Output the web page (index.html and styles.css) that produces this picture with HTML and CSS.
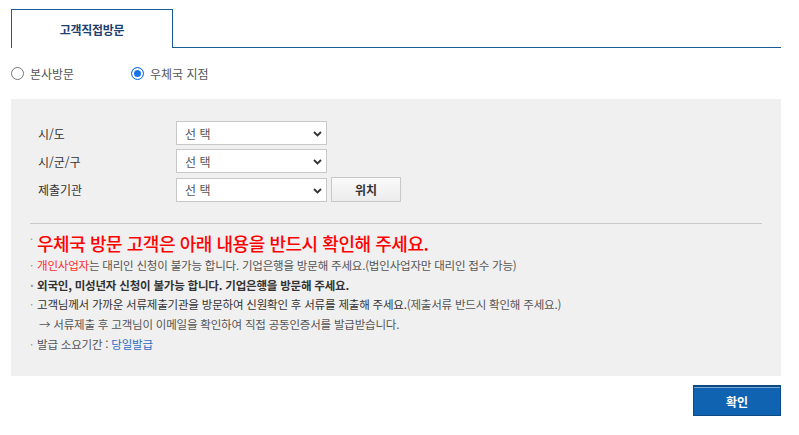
FILE: index.html
```html
<!DOCTYPE html>
<html lang="ko">
<head>
<meta charset="utf-8">
<link rel="stylesheet" href="styles.css">
</head>
<body>
<div class="page">
  <div class="tabs">
    <div class="tab">고객직접방문</div>
  </div>

  <div class="radios">
    <label class="radio"><span class="dot"></span>본사방문</label>
    <label class="radio on"><span class="dot"></span>우체국 지점</label>
  </div>

  <div class="panel">
    <div class="form">
      <div class="row">
        <div class="lbl">시/도</div>
        <div class="sel"><span>선 택</span><svg class="chev" width="9" height="6" viewBox="0 0 9 6"><path d="M1 1 L4.5 4.5 L8 1" fill="none" stroke="#333" stroke-width="1.8"/></svg></div>
      </div>
      <div class="row">
        <div class="lbl">시/군/구</div>
        <div class="sel"><span>선 택</span><svg class="chev" width="9" height="6" viewBox="0 0 9 6"><path d="M1 1 L4.5 4.5 L8 1" fill="none" stroke="#333" stroke-width="1.8"/></svg></div>
      </div>
      <div class="row">
        <div class="lbl">제출기관</div>
        <div class="sel"><span>선 택</span><svg class="chev" width="9" height="6" viewBox="0 0 9 6"><path d="M1 1 L4.5 4.5 L8 1" fill="none" stroke="#333" stroke-width="1.8"/></svg></div>
        <button class="btn-loc">위치</button>
      </div>
    </div>

    <div class="notice">
      <h2 class="head"><span class="b">·</span>우체국 방문 고객은 아래 내용을 반드시 확인해 주세요.</h2>
      <ul class="list">
        <li><span class="red">개인사업자</span>는 대리인 신청이 불가능 합니다. 기업은행을 방문해 주세요.(법인사업자만 대리인 접수 가능)</li>
        <li class="strong">외국인, 미성년자 신청이 불가능 합니다. 기업은행을 방문해 주세요.</li>
        <li><span class="dark">고객님께서 가까운 서류제출기관을 방문하여 신원확인 후 서류를 제출해 주세요.</span>(제출서류 반드시 확인해 주세요.)</li>
        <li class="arrow">→ 서류제출 후 고객님이 이메일을 확인하여 직접 공동인증서를 발급받습니다.</li>
        <li>발급 소요기간 : <span class="blue">당일발급</span></li>
      </ul>
    </div>
  </div>

  <div class="actions">
    <button class="btn-ok">확인</button>
  </div>
</div>
</body>
</html>
```

FILE: styles.css
```css
* { box-sizing: border-box; }
body {
  margin: 0;
  background: #fff;
  font-family: "Noto Sans CJK KR", "Noto Sans", sans-serif;
  color: #333;
}
.page {
  padding: 9px 18px 0 11px;
}
.tabs {
  display: flex;
  border-bottom: 1px solid #1b5b97;
  height: 39px;
}
.tab {
  width: 162px;
  height: 39px;
  border: 1px solid #1b5b97;
  border-bottom: none;
  background: #fff;
  display: flex;
  align-items: center;
  justify-content: center;
  font-size: 12px;
  font-weight: 700;
  color: #1f3f6e;
  letter-spacing: -0.3px;
}
.radios {
  display: flex;
  height: 51px;
  align-items: center;
  font-size: 12px;
  color: #555;
}
.radio {
  display: flex;
  align-items: center;
  width: 120px;
}
.dot {
  width: 13px;
  height: 13px;
  border-radius: 50%;
  border: 1px solid #767676;
  background: #fff;
  margin-right: 6px;
}
.radio.on .dot {
  border: 1px solid #1a73e8;
  box-shadow: inset 0 0 0 2px #fff;
  background: #1a73e8;
}
.panel {
  background: #f0f0f0;
  padding: 22px 19px 0 27px;
  height: 277px;
}
.form {
  display: flex;
  flex-direction: column;
  gap: 4px;
}
.row {
  display: flex;
  align-items: center;
}
.lbl {
  width: 138px;
  font-size: 12px;
  color: #333;
}
.sel {
  position: relative;
  width: 151px;
  height: 24px;
  background: #fff;
  border: 1px solid #c8c8c8;
  font-size: 12px;
  color: #555;
  display: flex;
  align-items: center;
  padding-left: 8px;
}
.chev {
  position: absolute;
  right: 4px;
  top: 9px;
}
.btn-loc {
  margin-left: 4px;
  width: 70px;
  height: 25px;
  border: 1px solid #c8c8c8;
  background: linear-gradient(#fafafa, #ececec);
  font-family: inherit;
  font-size: 12px;
  font-weight: 700;
  color: #333;
  padding: 0;
}
.notice {
  margin: 21px 0 0 -8px;
  border-top: 1px solid #c8c8c8;
}
.head {
  margin: 7px 0 0;
  font-size: 18px;
  font-weight: 500;
  color: #ff0000;
  line-height: 24px;
  letter-spacing: -0.45px;
  position: relative;
  padding-left: 7px;
}
.b {
  position: absolute;
  left: 0;
  top: -4px;
  font-size: 10px;
  color: #999;
}
.list {
  list-style: none;
  margin: 1px 0 0;
  padding: 0;
  font-size: 11.5px;
  color: #555;
  letter-spacing: -0.2px;
}
.list li {
  position: relative;
  padding-left: 7px;
  line-height: 19.7px;
}
.list li::before {
  content: "·";
  position: absolute;
  left: 0;
  color: #999;
}
.list li.arrow::before { content: none; }
.list li.arrow { padding-left: 9px; }
.red { color: #ff2b2b; }
.blue { color: #2a6bc4; }
.strong { font-weight: 700; color: #333; }
.dark { color: #333; }
.actions {
  display: flex;
  justify-content: flex-end;
  padding-top: 9px;
}
.btn-ok {
  width: 88px;
  height: 31px;
  border: 1px solid #0c4a85;
  border-top: 2px solid #0c4a85;
  box-shadow: inset 0 1px 0 rgba(255, 255, 255, 0.45);
  background: #0f63b0;
  color: #fff;
  font-family: inherit;
  font-size: 12px;
  font-weight: 700;
  padding: 0;
}
```
